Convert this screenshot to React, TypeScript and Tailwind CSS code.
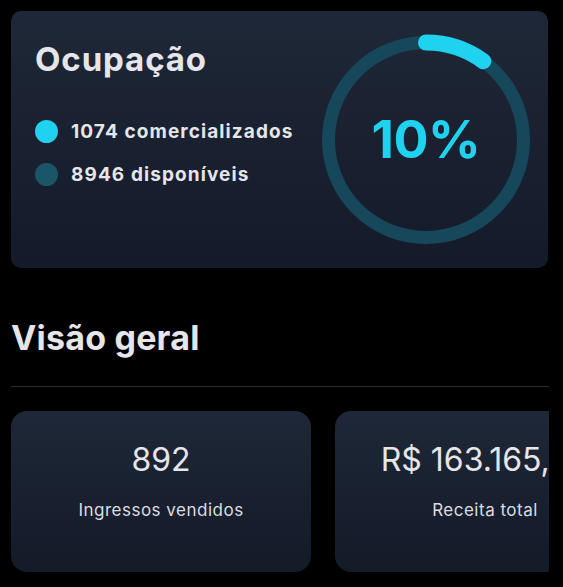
import React from "react";

const PROGRESS = 0.1;

const OccupancyRing = ({ value }: { value: number }) => {
  const size = 214;
  const c = size / 2;
  const r = 97.5;
  const circ = 2 * Math.PI * r;
  return (
    <div className="relative w-[214px] h-[214px] shrink-0">
      <svg width={size} height={size} viewBox={`0 0 ${size} ${size}`}>
        <circle cx={c} cy={c} r={r} fill="none" stroke="#17475b" strokeWidth={13} />
        <circle
          cx={c}
          cy={c}
          r={r}
          fill="none"
          stroke="#1fd3f0"
          strokeWidth={16}
          strokeLinecap="round"
          strokeDasharray={`${circ * value} ${circ}`}
          transform={`rotate(-90 ${c} ${c})`}
        />
      </svg>
      <div className="absolute inset-0 flex items-center justify-center">
        <span className="text-[52px] font-bold leading-none text-[#1fd3f0] tracking-[-0.5px]">
          {Math.round(value * 100)}%
        </span>
      </div>
    </div>
  );
};

const LegendRow = ({ color, label }: { color: string; label: string }) => (
  <div className="flex items-center h-[23px] gap-[13px]">
    <span className={`w-[23px] h-[23px] rounded-full ${color}`} />
    <span className="text-[19px] font-bold leading-none text-[#e5e5ea] tracking-[1.1px]">
      {label}
    </span>
  </div>
);

const StatCard = ({ value, label }: { value: string; label: string }) => (
  <div className="w-[300px] h-[161px] shrink-0 rounded-2xl bg-gradient-to-b from-[#1f2838] to-[#131a28] pt-[33px] flex flex-col items-center">
    <p className="text-[32px] leading-none text-[#e5e5ea] whitespace-nowrap">{value}</p>
    <p className="mt-[26px] text-[17px] leading-none text-[#dcdce0] whitespace-nowrap tracking-[0.5px]">
      {label}
    </p>
  </div>
);

export default function App() {
  return (
    <div
      className="w-[563px] h-[587px] bg-black overflow-hidden pl-[11px] pt-[11px]"
      style={{ fontFamily: "Inter, 'Noto Sans', sans-serif" }}
    >
      <div className="w-[538px] overflow-hidden">
        <div className="w-[537px] h-[257px] rounded-[10px] bg-gradient-to-b from-[#1f2838] to-[#141a29] flex justify-between pl-[24px] pr-[15px]">
          <div className="flex flex-col pt-[32px]">
            <h1 className="text-[33px] font-bold leading-none text-[#e5e5ea] tracking-[0.9px]">
              Ocupação
            </h1>
            <div className="mt-[44px] flex flex-col gap-[20px]">
              <LegendRow color="bg-[#1fd3f0]" label="1074 comercializados" />
              <LegendRow color="bg-[#1a5568]" label="8946 disponíveis" />
            </div>
          </div>
          <div className="pt-[22px]">
            <OccupancyRing value={PROGRESS} />
          </div>
        </div>

        <h2 className="mt-[53px] text-[34px] font-bold leading-none text-[#e5e5ea] tracking-[0.2px]">
          Visão geral
        </h2>
        <div className="mt-[31px] h-px bg-[#2c2c33]" />

        <div className="mt-[24px] flex gap-[24px]">
          <StatCard value="892" label="Ingressos vendidos" />
          <StatCard value="R$ 163.165,00" label="Receita total" />
        </div>
      </div>
    </div>
  );
}
